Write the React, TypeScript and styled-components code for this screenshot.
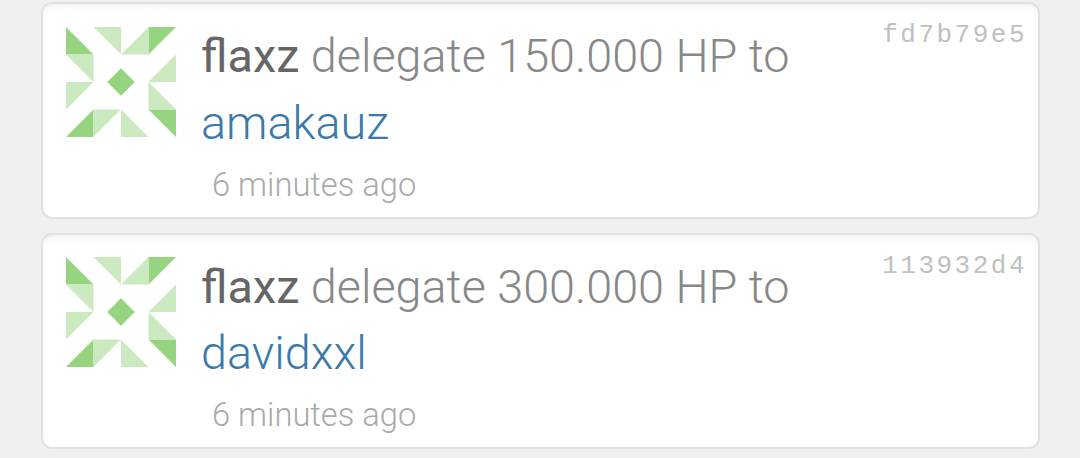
import React from 'react';
import styled, { createGlobalStyle } from 'styled-components';

const GlobalStyle = createGlobalStyle`
  * {
    box-sizing: border-box;
  }

  body {
    margin: 0;
    background-color: #f0f0f0;
    font-family: Roboto, sans-serif;
    font-weight: 300;
    overflow: hidden;
  }
`;

const Feed = styled.div`
  display: flex;
  flex-direction: column;
  gap: 14px;
  height: 458px;
  padding: 2.2px 40px 0 41px;
  overflow: hidden;
`;

const Card = styled.article`
  display: flex;
  align-items: flex-start;
  flex: none;
  height: 216.5px;
  padding: 22.5px 11px 0 23px;
  background-color: #fff;
  border: 2px solid #e1e1e1;
  border-radius: 11px;
  box-shadow: inset 0 4px 6px -2px rgba(0, 0, 0, 0.06);
`;

const Avatar = styled.svg`
  display: block;
  flex: none;
  width: 110px;
  height: 110px;
`;

const Body = styled.div`
  flex: 1;
  min-width: 0;
  margin: -3.5px 0 0 25px;
`;

const Message = styled.div`
  color: #888;
  font-size: 46.75px;
  line-height: 66.6px;
  white-space: nowrap;
`;

const Author = styled.strong`
  color: #666;
  font-weight: 400;
`;

const AccountLink = styled.a`
  display: block;
  color: #3a79ab;
  text-decoration: none;
`;

const Time = styled.div`
  margin-top: 0.3px;
  padding-left: 11px;
  color: #aaa;
  font-size: 32.7px;
  line-height: 56px;
`;

const TxId = styled.span`
  flex: none;
  margin-top: -7.5px;
  color: #c0c0c0;
  font-family: 'Liberation Mono', monospace;
  font-size: 26px;
  line-height: 32px;
  letter-spacing: 2.5px;
`;

interface Operation {
  id: string;
  author: string;
  amount: string;
  account: string;
  time: string;
}

const operations: Operation[] = [
  { id: 'fd7b79e5', author: 'flaxz', amount: '150.000 HP', account: 'amakauz', time: '6 minutes ago' },
  { id: '113932d4', author: 'flaxz', amount: '300.000 HP', account: 'davidxxl', time: '6 minutes ago' },
];

const Identicon: React.FC = () => (
  <Avatar viewBox="0 0 8 8" aria-hidden="true">
    <g fill="#97d47f">
      <path d="M0 0L2 2H0z" />
      <path d="M8 0L6 2V0z" />
      <path d="M8 8L6 6H8z" />
      <path d="M0 8L2 6V8z" />
      <path d="M4 3L5 4L4 5L3 4z" />
    </g>
    <g fill="#cbeabf">
      <path d="M2 0H4V2z" />
      <path d="M6 0V2H4z" />
      <path d="M8 2V4H6z" />
      <path d="M6 4L8 6H6z" />
      <path d="M4 6L6 8H4z" />
      <path d="M2 6H4L2 8z" />
      <path d="M0 4H2L0 6z" />
      <path d="M0 2H2V4z" />
    </g>
  </Avatar>
);

const OperationCard: React.FC<{ operation: Operation }> = ({ operation }) => {
  const { id, author, amount, account, time } = operation;

  return (
    <Card>
      <Identicon />
      <Body>
        <Message>
          <Author>{author}</Author> delegate {amount} to
          <AccountLink>{account}</AccountLink>
        </Message>
        <Time>{time}</Time>
      </Body>
      <TxId>{id}</TxId>
    </Card>
  );
};

export default function App() {
  return (
    <>
      <GlobalStyle />
      <Feed>
        {operations.map(operation => (
          <OperationCard key={operation.id} operation={operation} />
        ))}
      </Feed>
    </>
  );
}
